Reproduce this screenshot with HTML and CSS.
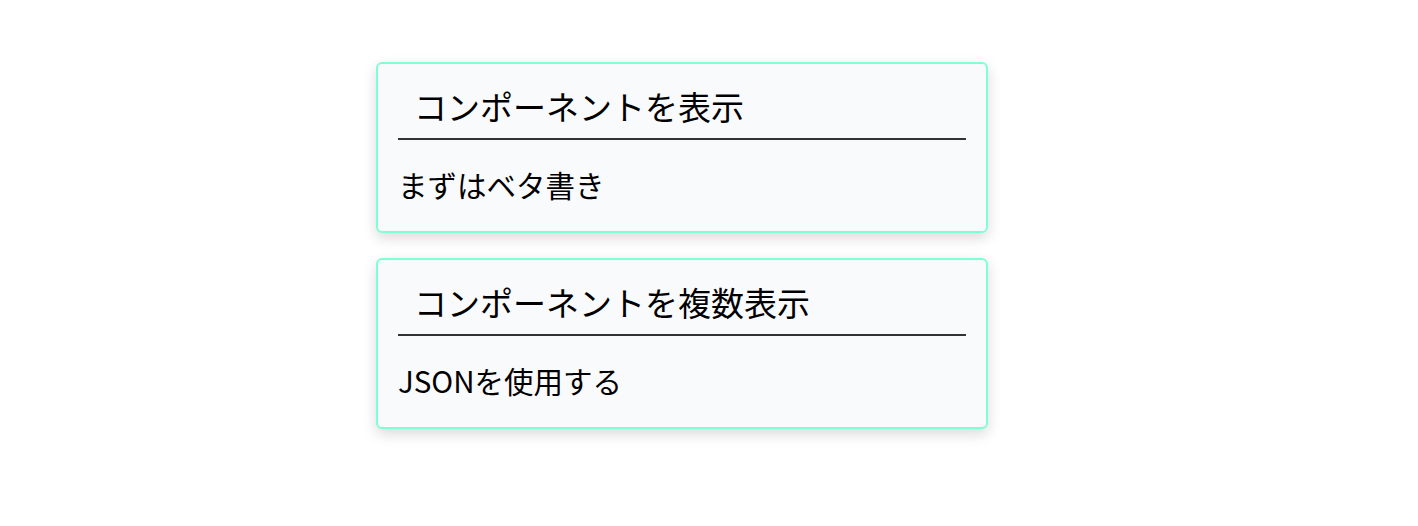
FILE: index.html
```html
<!DOCTYPE html>
<html lang="ja">
<head>
<meta charset="utf-8">
<link rel="stylesheet" href="styles.css">
</head>
<body>
<div class="page">
  <div class="card">
    <h3 class="card-title">コンポーネントを表示</h3>
    <p class="card-body">まずはベタ書き</p>
  </div>
  <div class="card">
    <h3 class="card-title">コンポーネントを複数表示</h3>
    <p class="card-body">JSONを使用する</p>
  </div>
</div>
</body>
</html>
```
FILE: styles.css
```css
html, body {
  margin: 0;
  background: #ffffff;
}
body {
  font-family: "Noto Sans CJK JP", "Noto Sans", sans-serif;
  color: #000;
}
.page {
  display: flex;
  flex-direction: column;
  gap: 25px;
  padding: 62px 0 60px 376px;
}
.card {
  width: 608px;
  border: 2px solid #7fffd4;
  border-radius: 6px;
  background: #f9fafc;
  box-shadow: 0 5px 14px rgba(0, 0, 0, 0.15);
}
.card-title {
  margin: 0 20px;
  padding: 22px 0 12px 16px;
  font-size: 33px;
  line-height: 40px;
  font-weight: 400;
  border-bottom: 2px solid #333;
}
.card-body {
  margin: 26px 20px 29px;
  font-size: 29.5px;
  line-height: 36px;
}
```
